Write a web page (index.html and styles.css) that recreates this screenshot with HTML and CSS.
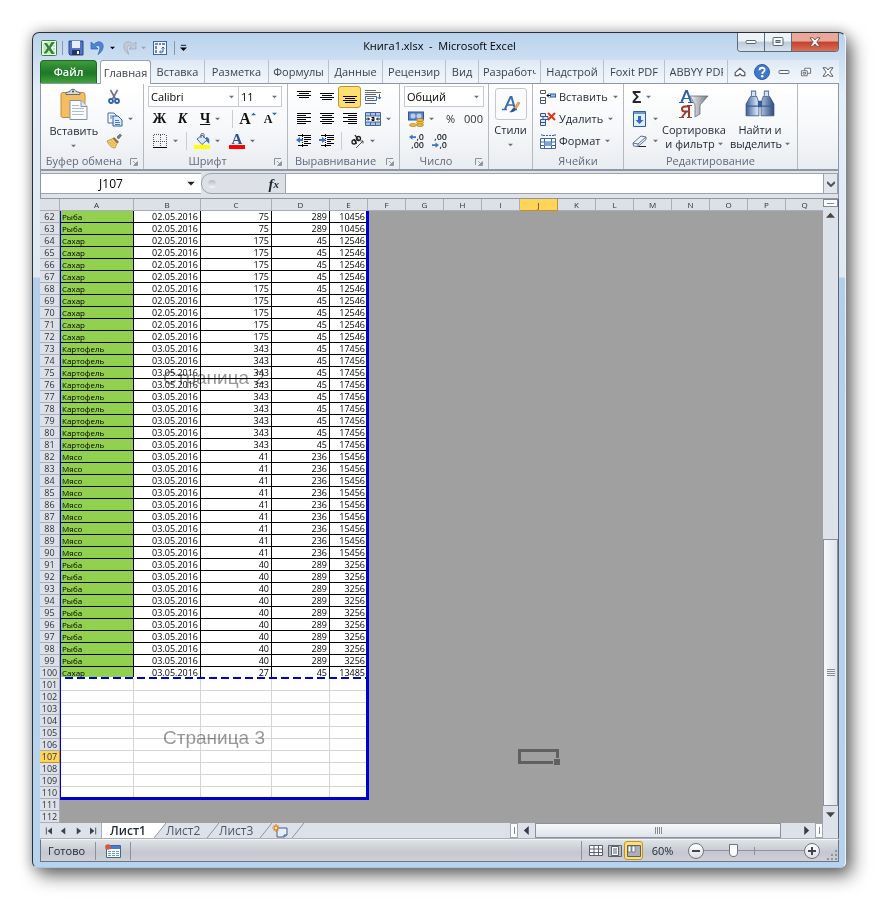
FILE: index.html
```html
<!DOCTYPE html>
<html lang="ru">
<head>
    <meta charset="UTF-8">
    <meta name="viewport" content="width=device-width, initial-scale=1.0">
    <title>Книга1.xlsx - Microsoft Excel</title>
    <link rel="stylesheet" href="styles.css">
</head>
<body>
    <svg class="sprite" aria-hidden="true">
        <defs>
            <linearGradient id="g-steel" x1="0" y1="0" x2="1" y2="0"><stop offset="0" stop-color="#3c5f97"/><stop offset=".4" stop-color="#d4e2f5"/><stop offset="1" stop-color="#2c4a7e"/></linearGradient>
            <linearGradient id="g-funnel" x1="0" y1="0" x2="1" y2="0"><stop offset="0" stop-color="#f2f2f2"/><stop offset="1" stop-color="#707880"/></linearGradient>
        </defs>
        <symbol id="arrow" viewBox="0 0 6 4"><path d="M0 0.500h6L3 3.500z" fill="currentColor"/></symbol>
        <symbol id="excel" viewBox="0 0 16 16"><rect x=".5" y=".5" width="15" height="15" rx="1" fill="#fff" stroke="#2f8a35"/><path d="M2 3l8-1.500v13L2 13z" fill="#cde8c8"/><path d="M3 3h3l2 3.500L10.500 2H14L9.700 8l4.300 6h-3.500L8 10l-2.500 3.500h-3L6.300 8z" fill="#2c8a30"/><path d="M12 6h2M12 9h2M12 12h2" stroke="#8cc28a"/></symbol>
        <symbol id="save" viewBox="0 0 16 16"><path d="M1 1h14v14H2l-1-1z" fill="#4f74c8" stroke="#2b4488"/><rect x="4" y="1" width="8" height="7" fill="#e8eefa"/><rect x="4" y="10" width="8" height="5" fill="#26375f"/><rect x="9" y="11" width="2" height="3" fill="#fff"/></symbol>
        <symbol id="undo" viewBox="0 0 16 16"><path d="M1 2v7h7L5.500 6.500C9 4 12 6 8 14.500c7-4 7-14-.5-12.500-1.500.5-3 1.500-3.500 2.500z" fill="#4d86d6" stroke="#2f5fa8" stroke-width=".7"/></symbol>
        <symbol id="redo" viewBox="0 0 16 16"><path d="M15 2v7H8l2.500-2.500C7 4 4 6 8 14.500 1 10.500 1 .5 8.500 2c1.500.5 3 1.500 3.500 2.500z" fill="#c4cbd4" stroke="#9ca6b2" stroke-width=".7"/></symbol>
        <symbol id="pivot" viewBox="0 0 16 16"><rect x="1.500" y="1.500" width="13" height="13" fill="#f4f8fd" stroke="#3f64a0"/><path d="M3 4h3M7 4h2M10 4h3M4 6v3M4 10v3" stroke="#3f64a0" stroke-width="1.500"/><path d="M8 12h3V7M9.500 8.500L11 7l1.500 1.500M9 10.500L7.500 12 9 13.500" fill="none" stroke="#2f5fa8"/></symbol>
        <symbol id="customize" viewBox="0 0 8 8"><path d="M1 1.500h6" stroke="#000"/><path d="M0 4h8L4 8z"/></symbol>
        <symbol id="minimize" viewBox="0 0 12 8"><rect x="1" y="2.500" width="10" height="3" rx="1" fill="#fff" stroke="#5a6470"/></symbol>
        <symbol id="maximize" viewBox="0 0 12 10"><rect x="1" y=".5" width="10" height="8" rx="1" fill="#fff" stroke="#5a6470"/><rect x="4" y="3.500" width="4" height="2" fill="#9fb2c8" stroke="#5a6470"/></symbol>
        <symbol id="close" viewBox="0 0 12 10"><path d="M1 .8h3.200L6 3l1.800-2.200H11L7.800 5 11 9.200H7.800L6 7 4.200 9.200H1L4.200 5z" fill="#fff" stroke="#6b3c3c" stroke-width=".8"/></symbol>
        <symbol id="chevron-up" viewBox="0 0 10 8"><path d="M1 4.500L5 1l4 3.500v2.500H6.500L5 5.500 3.500 7H1z" fill="#fff" stroke="#555c66"/></symbol>
        <symbol id="help" viewBox="0 0 16 16"><circle cx="8" cy="8" r="7.500" fill="#3f78cf" stroke="#2b5ca8"/><path d="M5.500 6.200c0-3.300 5.200-3.200 5.200-.2 0 1.900-2.500 1.900-2.500 4" fill="none" stroke="#fff" stroke-width="1.800"/><circle cx="8.200" cy="12.200" r="1.200" fill="#fff"/></symbol>
        <symbol id="restore" viewBox="0 0 12 12"><path d="M4.500 1.500h7v6h-7z" fill="#fff" stroke="#555c66"/><path d="M.5 4.500h7v6h-7z" fill="#fff" stroke="#555c66"/><path d="M2.500 6.500h3v2h-3z" fill="none" stroke="#555c66"/></symbol>
        <symbol id="doc-close" viewBox="0 0 12 10"><path d="M1 .8h3.200L6 3l1.800-2.200H11L7.800 5 11 9.200H7.800L6 7 4.200 9.200H1L4.200 5z" fill="#fff" stroke="#555c66"/></symbol>
        <symbol id="paste" viewBox="0 0 28 32"><rect x="1" y="4" width="24" height="25" rx="2" fill="#f3bd62" stroke="#c88a35"/><path d="M6 6V4l4-1c0-3 6-3 6 0l4 1v2z" fill="#d7dbe0" stroke="#646c78"/><circle cx="13" cy="3" r="1" fill="#444"/><path d="M10 12h11l6 6v13H10z" fill="#fbfcfe" stroke="#8291ab"/><path d="M21 12v6h6" fill="#dfe7f4" stroke="#8291ab"/><path d="M12 17h7M12 20h12M12 23h12M12 26h12" stroke="#b0bccf"/></symbol>
        <symbol id="cut" viewBox="0 0 16 16"><path d="M4.500 1l5 9M11.500 1l-5 9" stroke="#6c7480" stroke-width="1.600"/><circle cx="5" cy="12" r="2" fill="none" stroke="#2f5fb8" stroke-width="1.800"/><circle cx="11" cy="12" r="2" fill="none" stroke="#2f5fb8" stroke-width="1.800"/></symbol>
        <symbol id="copy" viewBox="0 0 16 16"><path d="M1 2h6l3 3v7H1z" fill="#f4f8fd" stroke="#3d6cb5"/><path d="M6 5h5l4 4v6H6z" fill="#dce9fa" stroke="#2d5ca8"/><path d="M3 5h3M3 7h2M8 9.500h4M8 11.500h5M8 13.500h5" stroke="#4d7cc5"/></symbol>
        <symbol id="brush" viewBox="0 0 16 16"><path d="M11 4l3-3 1.500 1.500L12.500 6z" fill="#6c7f9c" stroke="#3c4a60" stroke-width=".6"/><path d="M8 4l5 5-2 1.500L6.500 6z" fill="#8a6a4a"/><path d="M1 8l6-2.500 4 5L9 15c-2 .5-6-2-8-7z" fill="#f3cd74" stroke="#b88b34" stroke-width=".8"/><path d="M3 9l5 4M5 7.500l4.500 4" stroke="#c89a45" stroke-width=".7"/></symbol>
        <symbol id="border" viewBox="0 0 16 16"><path d="M1.500 2v11M8.500 2v11M14.500 2v11M2 1.500h12M2 8.500h12" stroke="#555" stroke-dasharray="1 1"/><path d="M1 14.500h14" stroke="#000"/></symbol>
        <symbol id="bucket" viewBox="0 0 16 16"><path d="M3 6l5-4 5 5-5 4.500z" fill="#dbe8f8" stroke="#4b6d9c"/><path d="M7 5V1.500c0-1.500 3-1.500 3 0V5" fill="none" stroke="#4b5870"/><path d="M12 4c3 0 4 3 3 7-1-2-2-2-3-3z" fill="#3f6fb5"/><path d="M0 12h16v4H0z" fill="#ff0"/></symbol>
        <symbol id="align-v" viewBox="0 0 16 12"><path d="M1 2.500h14M3 4.500h10M1 6.500h14M3 8.500h10" stroke="#000"/></symbol>
        <symbol id="align-c" viewBox="0 0 16 12"><path d="M1 .5h14M3 2.500h10M1 4.500h14M3 6.500h10M1 8.500h14M3 10.500h10" stroke="#000"/></symbol>
        <symbol id="align-l" viewBox="0 0 16 12"><path d="M1 .5h14M1 2.500h9M1 4.500h14M1 6.500h9M1 8.500h14M1 10.500h9" stroke="#000"/></symbol>
        <symbol id="align-r" viewBox="0 0 16 12"><path d="M1 .5h14M6 2.500h9M1 4.500h14M6 6.500h9M1 8.500h14M6 10.500h9" stroke="#000"/></symbol>
        <symbol id="indent-out" viewBox="0 0 16 16"><path d="M2 2.500h13M8 4.500h7M8 6.500h7M8 8.500h4M8 10.500h7M2 12.500h10" stroke="#000"/><path d="M6.500 1v14" stroke="#000" stroke-dasharray="1 1"/><path d="M0 7l4-3v2h3v2H4v2z" fill="#3b74c8"/></symbol>
        <symbol id="indent-in" viewBox="0 0 16 16"><path d="M2 2.500h13M8 4.500h7M8 6.500h7M8 8.500h4M8 10.500h7M2 12.500h10" stroke="#000"/><path d="M6.500 1v14" stroke="#000" stroke-dasharray="1 1"/><path d="M7 7L3 4v2H0v2h3v2z" fill="#3b74c8"/></symbol>
        <symbol id="wrap" viewBox="0 0 16 16"><path d="M0 1.500h11M0 5.500h11M.5 7.500h11v4H.5zM0 14.500h11" fill="none" stroke="#44689f"/><path d="M0 3.500h16M2 9.500h7" stroke="#a8562c"/><path d="M14.500 5v5M12.500 8l2 2 1.500-2" fill="none" stroke="#2f5fa8"/></symbol>
        <symbol id="merge" viewBox="0 0 16 16"><path d="M.5 1.500h15v13H.5z" fill="#a9c3e8" stroke="#3f64a0"/><path d="M1 5h14v6H1z" fill="#fff"/><path d="M5.500 1.500V5M10.500 1.500V5M5.500 11v3.500M10.500 11v3.500M.5 5h15M.5 11h15" stroke="#3f64a0"/><path d="M1 8h3M12 8h3M3 6.500L4.500 8 3 9.500M13 6.500L11.500 8l1.500 1.500" fill="none" stroke="#000"/><path d="M6.500 6.500h2.500v3H7V8h2" fill="none" stroke="#000"/></symbol>
        <symbol id="orient" viewBox="0 0 16 16"><g fill="none" stroke="#222" stroke-width="1.300"><circle cx="5" cy="9" r="2"/><path d="M5 6l2.500 5"/><path d="M6 2l4 6"/><circle cx="9.500" cy="5.500" r="2"/></g><path d="M7 15l7-7M11.500 8H14v2.500" fill="none" stroke="#555"/></symbol>
        <symbol id="money" viewBox="0 0 16 16"><rect x=".5" y="1" width="15" height="8" fill="#5d87c6" stroke="#2f5796"/><circle cx="5" cy="5" r="2.500" fill="#b9d0ee"/><circle cx="11" cy="5" r="2.500" fill="#b9d0ee"/><g fill="#f2c043" stroke="#a87a1c" stroke-width=".7"><ellipse cx="12" cy="14" rx="3.500" ry="1.500"/><ellipse cx="12" cy="11.500" rx="3.500" ry="1.500"/><ellipse cx="12" cy="9" rx="3.500" ry="1.500"/><ellipse cx="5" cy="14" rx="3.500" ry="1.500"/></g></symbol>
        <symbol id="left-blue" viewBox="0 0 8 6"><path d="M0 3l4-3v2h4v2H4v2z" fill="#3b74c8"/></symbol>
        <symbol id="right-blue" viewBox="0 0 8 6"><path d="M8 3L4 0v2H0v2h4v2z" fill="#3b74c8"/></symbol>
        <symbol id="styles" viewBox="0 0 20 20"><g fill="none" stroke="#3c6cb4"><path d="M4 15L9.500 3h1L14 15" stroke-width="2"/><path d="M6 11h7M1 15.500h5M11 15.500h5" stroke-width="1.500"/></g><path d="M17 8l2 1-4 6-2-1z" fill="#e9b45a" stroke="#9c6a24" stroke-width=".5"/><path d="M8 18c2 0 3-4 5-4l2 1c0 2-4 4-7 3z" fill="#2d5597"/></symbol>
        <symbol id="insert" viewBox="0 0 16 16"><path d="M.5 1.500h5v3h-5zM.5 8.500h5v6h-5zM.5 11.500h5" fill="#fff" stroke="#4a5a70"/><path d="M7 6.500h4M9 4.500l-2 2 2 2" fill="none" stroke="#000"/><rect x="10.500" y="5" width="5" height="3" fill="#9fc0ec" stroke="#2f5fa8"/></symbol>
        <symbol id="delete" viewBox="0 0 16 16"><path d="M.5 2.500h5v3h-5zM.5 8.500h5v6h-5zM.5 11.500h5M3 5.500h5v3H3z" fill="#dce9f8" stroke="#35588c"/><path d="M8 2l7 7M15 2L8 9" stroke="#e03418" stroke-width="2"/></symbol>
        <symbol id="format" viewBox="0 0 16 16"><path d="M2 1v3M15 1v3M3 2.500h11" stroke="#2f5fa8" stroke-dasharray="2 1"/><path d="M.5 5.500h15v10H.5z" fill="#fff" stroke="#3f64a0"/><path d="M4.500 5.500v10M11.500 5.500v10M.5 9h15M.5 12.500h15" stroke="#3f64a0"/><path d="M4.500 9h7v4h-7z" fill="#7ba4dc"/></symbol>
        <symbol id="fill" viewBox="0 0 14 16"><path d="M.5.500h12v15H.5z" fill="#e3eefb" stroke="#2f5fa8"/><path d="M1 1h11v2H1z" fill="#6d98d6"/><path d="M5 5h3v4h2.500l-4 4-4-4H5z" fill="#2f6ac8"/></symbol>
        <symbol id="eraser" viewBox="0 0 16 16"><path d="M5 13.500h9" stroke="#222"/><path d="M1 10l8-7 5 1v2.500L6 13.500 1.500 13z" fill="#f1f5fb" stroke="#5c6f90"/><path d="M1 10l5 1v2.500M6 11l8-7" fill="none" stroke="#5c6f90"/></symbol>
        <symbol id="sort" viewBox="0 0 30 30"><path d="M11 7h18l-8 9v9l-5 3V16z" fill="url(#g-funnel)" stroke="#666e78" stroke-width=".8"/><g fill="none" stroke="#2c5cb0"><path d="M2.500 13L7 2h1l4 11" stroke-width="2"/><path d="M4 9.500h6M0 13.500h5M9 13.500h5"/></g><g fill="none" stroke="#9b3a28"><path d="M10 17v11M10 17.500H6c-4 0-4 5 0 5h4M7 23l-4 5" stroke-width="2"/><path d="M0 28.500h5M8 28.500h5M8 16.500h5"/></g></symbol>
        <symbol id="find" viewBox="0 0 28 26"><path d="M5 6h6l2 6v12H1V13zM17 6h6l4 7v11H15V12z" fill="url(#g-steel)" stroke="#2e4a7c" stroke-width=".7"/><path d="M12 10h4v6h-4z" fill="#385c98"/><path d="M6 1h4v5H6zM18 1h4v5h-4z" fill="#d5e1f2" stroke="#5a78a8"/><path d="M1 15h12M15 15h12" stroke="#3c5c90"/></symbol>
        <symbol id="launcher" viewBox="0 0 8 8"><path d="M.5 7V.5H7" fill="none" stroke="#8a929e"/><path d="M3 3l3 3M7.500 3.500v4h-4z" fill="#8a929e" stroke="#8a929e" stroke-width=".8"/></symbol>
        <symbol id="new-sheet" viewBox="0 0 16 14"><path d="M5 4h10v7l-3 2H5z" fill="#e6eefa" stroke="#3f5f92"/><path d="M15 11h-3v2" fill="#a9bfe0" stroke="#3f5f92"/><path d="M4 0v8M0 4h8M1.500 1.500l5 5M6.500 1.500l-5 5" stroke="#e07d1c" stroke-width="1.200"/><circle cx="4" cy="4" r="1.300" fill="#fff2b0"/></symbol>
        <symbol id="macro" viewBox="0 0 16 14"><path d="M1.500 1.500h14v12h-14z" fill="#fff" stroke="#3f64a0"/><path d="M2 2h13v3H2z" fill="#4b7cc8"/><path d="M3 7.500h11M3 9.500h11M3 11.500h11" stroke="#6f94cc" stroke-dasharray="3 1"/><circle cx="3" cy="3" r="2.800" fill="#d5583a"/></symbol>
        <symbol id="view-grid" viewBox="0 0 14 12"><path d="M.5.500h13v10H.5zM5 .5v10M9.500.500v10M.5 4h13M.5 7.500h13" fill="#fff" stroke="#5a626e"/></symbol>
        <symbol id="view-page" viewBox="0 0 14 12"><path d="M.5.500h13v11H.5z" fill="#b4bac2" stroke="#5a626e"/><path d="M3.500 1.500h7v9h-7z" fill="#fff" stroke="#5a626e"/><path d="M5 4h4M5 6h4M5 8h4" stroke="#5a626e"/></symbol>
        <symbol id="view-break" viewBox="0 0 14 12"><path d="M.5.500h13v11H.5z" fill="#a9b0bb" stroke="#5a626e"/><path d="M1 1h3v6H1zM5 1h3v6H5z" fill="#fff" stroke="#5a626e" stroke-width=".7"/></symbol>
        <symbol id="slant" viewBox="0 0 12 15"><path d="M0 15L12 0" stroke="#8d949f"/></symbol>
        <symbol id="slant-on" viewBox="0 0 12 15"><path d="M0 0h12L0 15z" fill="#fff"/><path d="M0 15L12 0" stroke="#8d949f"/></symbol>
    </svg>

    <div class="window">
        <header class="title-bar">
            <div class="quick">
                <svg class="ico"><use href="#excel"/></svg>
                <span class="bar-sep"></span>
                <button class="quick-btn" aria-label="Сохранить"><svg class="ico"><use href="#save"/></svg></button>
                <button class="quick-btn" aria-label="Отменить"><svg class="ico"><use href="#undo"/></svg><svg class="arrow"><use href="#arrow"/></svg></button>
                <button class="quick-btn off" aria-label="Вернуть"><svg class="ico"><use href="#redo"/></svg><svg class="arrow"><use href="#arrow"/></svg></button>
                <button class="quick-btn" aria-label="Сводная таблица"><svg class="ico"><use href="#pivot"/></svg></button>
                <span class="bar-sep"></span>
                <button class="quick-btn" aria-label="Настройка панели"><svg class="customize"><use href="#customize"/></svg></button>
            </div>
            <h1 class="title">Книга1.xlsx&nbsp; -&nbsp; Microsoft Excel</h1>
            <div class="win-buttons">
                <button class="win-btn" aria-label="Свернуть"><svg><use href="#minimize"/></svg></button>
                <button class="win-btn" aria-label="Развернуть"><svg><use href="#maximize"/></svg></button>
                <button class="win-btn win-close" aria-label="Закрыть"><svg><use href="#close"/></svg></button>
            </div>
        </header>

        <nav class="tabs">
            <button class="tab file">Файл</button>
            <button class="tab active">Главная</button>
            <button class="tab">Вставка</button>
            <button class="tab">Разметка</button>
            <button class="tab">Формулы</button>
            <button class="tab">Данные</button>
            <button class="tab">Рецензир</button>
            <button class="tab">Вид</button>
            <button class="tab"><span class="clip">Разработч</span></button>
            <button class="tab">Надстрой</button>
            <button class="tab">Foxit PDF</button>
            <button class="tab"><span class="clip">ABBYY PDF</span></button>
            <div class="doc-buttons">
                <button class="doc-btn" aria-label="Свернуть ленту"><svg class="mini"><use href="#chevron-up"/></svg></button>
                <button class="doc-btn" aria-label="Справка"><svg class="ico"><use href="#help"/></svg></button>
                <button class="doc-btn" aria-label="Свернуть окно"><svg class="mini"><use href="#minimize"/></svg></button>
                <button class="doc-btn" aria-label="Восстановить окно"><svg class="mini"><use href="#restore"/></svg></button>
                <button class="doc-btn" aria-label="Закрыть окно"><svg class="mini"><use href="#doc-close"/></svg></button>
            </div>
        </nav>

        <section class="ribbon">
            <div class="group">
                <div class="group-body side">
                    <button class="big"><svg class="paste"><use href="#paste"/></svg>Вставить<svg class="arrow"><use href="#arrow"/></svg></button>
                    <div class="stack">
                        <button class="tool" aria-label="Вырезать"><svg class="ico"><use href="#cut"/></svg></button>
                        <button class="tool drop" aria-label="Копировать"><svg class="ico"><use href="#copy"/></svg><svg class="arrow"><use href="#arrow"/></svg></button>
                        <button class="tool" aria-label="Формат по образцу"><svg class="ico"><use href="#brush"/></svg></button>
                    </div>
                </div>
                <div class="group-title">Буфер обмена<svg class="launcher"><use href="#launcher"/></svg></div>
            </div>

            <div class="group">
                <div class="group-body stack">
                    <div class="line">
                        <label class="combo font-name"><select aria-label="Шрифт"><option>Calibri</option></select><svg class="arrow"><use href="#arrow"/></svg></label>
                        <label class="combo font-size"><select aria-label="Размер"><option>11</option></select><svg class="arrow"><use href="#arrow"/></svg></label>
                    </div>
                    <div class="line">
                        <button class="tool letter">Ж</button>
                        <button class="tool letter italic">К</button>
                        <button class="tool drop letter"><u>Ч</u><svg class="arrow"><use href="#arrow"/></svg></button>
                        <span class="sep"></span>
                        <button class="tool letter grow">A<svg class="caret up"><use href="#arrow"/></svg></button>
                        <button class="tool letter shrink">A<svg class="caret"><use href="#arrow"/></svg></button>
                    </div>
                    <div class="line">
                        <button class="tool drop" aria-label="Границы"><svg class="ico"><use href="#border"/></svg><svg class="arrow"><use href="#arrow"/></svg></button>
                        <span class="sep"></span>
                        <button class="tool drop" aria-label="Заливка"><svg class="ico"><use href="#bucket"/></svg><svg class="arrow"><use href="#arrow"/></svg></button>
                        <button class="tool drop"><span class="font-color">A</span><svg class="arrow"><use href="#arrow"/></svg></button>
                    </div>
                </div>
                <div class="group-title">Шрифт<svg class="launcher"><use href="#launcher"/></svg></div>
            </div>

            <div class="group">
                <div class="group-body stack">
                    <div class="line">
                        <button class="tool lift" aria-label="По верхнему краю"><svg class="lines"><use href="#align-v"/></svg></button>
                        <button class="tool" aria-label="По середине"><svg class="lines"><use href="#align-v"/></svg></button>
                        <button class="tool pressed sink" aria-label="По нижнему краю"><svg class="lines"><use href="#align-v"/></svg></button>
                        <button class="tool drop" aria-label="Перенос текста"><svg class="ico"><use href="#wrap"/></svg></button>
                    </div>
                    <div class="line">
                        <button class="tool" aria-label="По левому краю"><svg class="lines"><use href="#align-l"/></svg></button>
                        <button class="tool" aria-label="По центру"><svg class="lines"><use href="#align-c"/></svg></button>
                        <button class="tool" aria-label="По правому краю"><svg class="lines"><use href="#align-r"/></svg></button>
                        <button class="tool drop" aria-label="Объединить"><svg class="ico"><use href="#merge"/></svg><svg class="arrow"><use href="#arrow"/></svg></button>
                    </div>
                    <div class="line">
                        <button class="tool" aria-label="Уменьшить отступ"><svg class="ico"><use href="#indent-out"/></svg></button>
                        <button class="tool" aria-label="Увеличить отступ"><svg class="ico"><use href="#indent-in"/></svg></button>
                        <span class="sep"></span>
                        <button class="tool drop" aria-label="Ориентация"><svg class="ico"><use href="#orient"/></svg><svg class="arrow"><use href="#arrow"/></svg></button>
                    </div>
                </div>
                <div class="group-title">Выравнивание<svg class="launcher"><use href="#launcher"/></svg></div>
            </div>

            <div class="group">
                <div class="group-body stack">
                    <div class="line">
                        <label class="combo number-format"><select aria-label="Числовой формат"><option>Общий</option></select><svg class="arrow"><use href="#arrow"/></svg></label>
                    </div>
                    <div class="line">
                        <button class="tool drop" aria-label="Финансовый формат"><svg class="ico"><use href="#money"/></svg><svg class="arrow"><use href="#arrow"/></svg></button>
                        <button class="tool digits">%</button>
                        <button class="tool digits">000</button>
                    </div>
                    <div class="line">
                        <button class="tool decimals"><span><svg class="step"><use href="#left-blue"/></svg>,0</span><span>,00</span></button>
                        <button class="tool decimals"><span>,00</span><span><svg class="step"><use href="#right-blue"/></svg>,0</span></button>
                    </div>
                </div>
                <div class="group-title">Число<svg class="launcher"><use href="#launcher"/></svg></div>
            </div>

            <div class="group">
                <div class="group-body side center">
                    <button class="big"><span class="styles-box"><svg class="styles"><use href="#styles"/></svg></span>Стили<svg class="arrow"><use href="#arrow"/></svg></button>
                </div>
            </div>

            <div class="group">
                <div class="group-body stack">
                    <button class="wide"><svg class="ico"><use href="#insert"/></svg>Вставить<svg class="arrow"><use href="#arrow"/></svg></button>
                    <button class="wide"><svg class="ico"><use href="#delete"/></svg>Удалить<svg class="arrow"><use href="#arrow"/></svg></button>
                    <button class="wide"><svg class="ico"><use href="#format"/></svg>Формат<svg class="arrow"><use href="#arrow"/></svg></button>
                </div>
                <div class="group-title plain">Ячейки</div>
            </div>

            <div class="group">
                <div class="group-body side editing">
                    <div class="stack">
                        <button class="tool drop sum">Σ<svg class="arrow"><use href="#arrow"/></svg></button>
                        <button class="tool drop" aria-label="Заполнить"><svg class="ico"><use href="#fill"/></svg><svg class="arrow"><use href="#arrow"/></svg></button>
                        <button class="tool drop" aria-label="Очистить"><svg class="ico"><use href="#eraser"/></svg><svg class="arrow"><use href="#arrow"/></svg></button>
                    </div>
                    <button class="big edit"><svg class="large"><use href="#sort"/></svg>Сортировка<span>и фильтр <svg class="arrow"><use href="#arrow"/></svg></span></button>
                    <button class="big edit"><svg class="large"><use href="#find"/></svg>Найти и<span>выделить <svg class="arrow"><use href="#arrow"/></svg></span></button>
                </div>
                <div class="group-title plain">Редактирование</div>
            </div>
        </section>

        <section class="formula-bar">
            <label class="name-box"><input type="text" value="J107" aria-label="Имя"><svg class="name-arrow"><use href="#arrow"/></svg></label>
            <div class="fx-area"><span class="knob"></span><button class="fx">f<sub>x</sub></button></div>
            <input class="formula" type="text" aria-label="Строка формул">
            <button class="expand" aria-label="Развернуть строку формул"><svg viewBox="0 0 8 6"><path d="M0 1l4 4 4-4" fill="none" stroke="#4c545e" stroke-width="2"/></svg></button>
        </section>

        <main class="workspace">
            <div class="sheet">
                <table class="grid">
                    <colgroup>
                        <col class="c-head"><col class="c-a"><col class="c-b"><col class="c-c"><col class="c-d"><col class="c-e">
                        <col span="12" class="c-rest">
                    </colgroup>
                    <thead>
                        <tr>
                            <th class="corner"></th><th>A</th><th>B</th><th>C</th><th>D</th><th>E</th><th>F</th><th>G</th><th>H</th><th>I</th><th class="current">J</th><th>K</th><th>L</th><th>M</th><th>N</th><th>O</th><th>P</th><th>Q</th>
                        </tr>
                    </thead>
                    <tbody id="rows"></tbody>
                </table>
                <div class="print-area"><span class="page-break"></span></div>
                <span class="page-mark second">Страница 2</span>
                <span class="page-mark third">Страница 3</span>
                <span class="cell-cursor"></span>
            </div>
            <div class="v-scroll">
                <span class="v-split"></span>
                <button class="scroll-btn" aria-label="Вверх"><svg viewBox="0 0 10 6"><path d="M0 5.500L5 0l5 5.500z" fill="#4a4444"/></svg></button>
                <span class="v-track"></span>
                <span class="v-thumb"></span>
                <button class="scroll-btn" aria-label="Вниз"><svg viewBox="0 0 10 6"><path d="M0 .5L5 6l5-5.500z" fill="#4a4444"/></svg></button>
            </div>
        </main>

        <div class="sheet-bar">
            <div class="sheet-nav">
                <button aria-label="Первый лист"><svg viewBox="0 0 8 8"><path d="M1.500 0v8" stroke="#3b424c"/><path d="M8 0v8L3 4z" fill="#3b424c"/></svg></button>
                <button aria-label="Предыдущий лист"><svg viewBox="0 0 8 8"><path d="M6 0v8L1 4z" fill="#3b424c"/></svg></button>
                <button aria-label="Следующий лист"><svg viewBox="0 0 8 8"><path d="M2 0v8l5-4z" fill="#3b424c"/></svg></button>
                <button aria-label="Последний лист"><svg viewBox="0 0 8 8"><path d="M6.500 0v8" stroke="#3b424c"/><path d="M0 0v8l5-4z" fill="#3b424c"/></svg></button>
            </div>
            <button class="sheet-tab current">Лист1</button><svg class="slant"><use href="#slant-on"/></svg>
            <button class="sheet-tab">Лист2</button><svg class="slant"><use href="#slant"/></svg>
            <button class="sheet-tab">Лист3</button><svg class="slant"><use href="#slant"/></svg>
            <button class="sheet-tab add" aria-label="Вставить лист"><svg class="new-sheet"><use href="#new-sheet"/></svg></button><svg class="slant"><use href="#slant"/></svg>
            <div class="h-scroll">
                <span class="h-split"></span>
                <button class="scroll-btn" aria-label="Влево"><svg viewBox="0 0 6 10"><path d="M5.500 0v10L0 5z" fill="#3b3b44"/></svg></button>
                <span class="h-thumb"></span>
                <span class="h-track"></span>
                <button class="scroll-btn" aria-label="Вправо"><svg viewBox="0 0 6 10"><path d="M.5 0v10L6 5z" fill="#3b3b44"/></svg></button>
                <span class="h-split"></span>
            </div>
            <span class="scroll-corner"></span>
        </div>

        <footer class="status">
            <span class="ready">Готово</span>
            <button class="macro" aria-label="Запись макроса"><svg class="ico"><use href="#macro"/></svg></button>
            <div class="views">
                <button class="view" aria-label="Обычный"><svg><use href="#view-grid"/></svg></button>
                <button class="view" aria-label="Разметка страницы"><svg><use href="#view-page"/></svg></button>
                <button class="view pressed" aria-label="Страничный режим"><svg><use href="#view-break"/></svg></button>
            </div>
            <label class="zoom-label" for="zoom">60%</label>
            <button class="round" aria-label="Уменьшить"><svg viewBox="0 0 8 8"><path d="M0 4h8" stroke="#3f4650" stroke-width="2"/></svg></button>
            <input id="zoom" class="zoom" type="range" min="0" max="100" value="28">
            <button class="round" aria-label="Увеличить"><svg viewBox="0 0 8 8"><path d="M0 4h8M4 0v8" stroke="#3f4650" stroke-width="2"/></svg></button>
            <svg class="grip" viewBox="0 0 12 12"><path d="M9 1h2v2H9zM5 5h2v2H5zM9 5h2v2H9zM1 9h2v2H1zM5 9h2v2H5zM9 9h2v2H9z" fill="#8d949e"/></svg>
        </footer>
    </div>

    <script src="script.js"></script>
</body>
</html>
```
FILE: styles.css
```css
* {
    box-sizing: border-box;
}
body {
    margin: 0;
    padding: 32px 33px 33px 32px;
    background: #fff;
    font-family: "Open Sans", "Noto Sans", sans-serif;
    font-size: 11px;
    line-height: 14px;
    color: #1e2531;
}
button, input, select {
    margin: 0;
    padding: 0;
    border: 0;
    background: none;
    font: inherit;
    color: inherit;
    border-radius: 0;
    outline: 0;
}
button {
    display: flex;
    align-items: center;
    justify-content: center;
}
svg {
    display: block;
    flex: none;
}
.sprite {
    position: absolute;
    width: 0;
    height: 0;
}
.ico {
    width: 16px;
    height: 16px;
}
.arrow {
    width: 5px;
    height: 4px;
    color: #6a717c;
}

/* window frame */
.window {
    padding: 0 6px 5px 7px;
    border: 1px solid #2b3038;
    border-right-color: #eaf3fb;
    border-bottom-color: #a9c3e0;
    border-radius: 7px 7px 6px 6px;
    background: linear-gradient(#b9d2ec 0, #e4eef8 60px, #dfe9f4 244px, #b4cfea 245px, #b8d3ee 100%);
    box-shadow: 6px 8px 18px 0 rgba(0, 0, 0, 0.55), 0 0 12px 2px rgba(0, 0, 0, 0.2);
}
.title-bar {
    display: grid;
    grid-template-columns: 1fr auto 1fr;
    height: 27px;
}
.quick {
    display: flex;
    align-items: center;
    gap: 5px;
    padding: 2px 0 0 1px;
}
.quick-btn {
    gap: 4px;
    height: 22px;
    padding-right: 1px;
}
.quick-btn .arrow {
    color: #000;
}
.quick-btn.off .arrow {
    color: #9aa2ac;
}
.bar-sep {
    width: 1px;
    height: 14px;
    background: #8b97a6;
}
.customize {
    width: 7px;
    height: 7px;
}
.title {
    margin: 0;
    font-size: 11px;
    font-weight: 400;
    line-height: 26px;
    color: #000;
}
.win-buttons {
    display: flex;
    justify-self: end;
    height: 19px;
    border: 1px solid #5d6b7c;
    border-top: 0;
    border-radius: 0 0 4px 4px;
    overflow: hidden;
}
.win-btn {
    width: 27px;
    border-right: 1px solid #5d6b7c;
    background: linear-gradient(#eef3f8 45%, #bccad9 50%, #d8e3ee);
}
.win-btn svg {
    width: 12px;
    height: 10px;
}
.win-close {
    width: 46px;
    border-right: 0;
    background: linear-gradient(#e9a898 45%, #c5402c 50%, #d87058);
}

/* ribbon tabs */
.tabs {
    display: grid;
    grid-template-columns: 60px 51px 54px 64px 60px 54px 63px 33px 62px 63px 61px 63px 1fr;
    height: 24px;
    border-bottom: 1px solid #8d97a3;
    background: linear-gradient(#dfe9f4, #f3f7fb);
}
.tab {
    height: 23px;
    border-right: 1px solid #b9c1cb;
    color: #3b424d;
    white-space: nowrap;
    overflow: hidden;
}
.tab.file {
    width: 57px;
    border: 1px solid #1f6a24;
    border-bottom: 0;
    border-radius: 4px 4px 0 0;
    background: linear-gradient(#3f9a3c, #1f7627 55%, #3fa43a);
    color: #fff;
    font-weight: 600;
}
.tab.active {
    height: 24px;
    border: 1px solid #98a3b0;
    border-bottom: 0;
    border-radius: 3px 3px 0 0;
    background: #fff;
}
.clip {
    width: 53px;
    text-align: left;
    overflow: hidden;
}
.doc-buttons {
    display: grid;
    grid-template-columns: repeat(5, 22px);
    justify-content: center;
}
.mini {
    width: 12px;
    height: 10px;
}

/* ribbon */
.ribbon {
    display: grid;
    grid-template-columns: 103px 144px 112px 89px 44px 91px 174px;
    height: 87px;
    border-left: 1px solid #8d97a3;
    border-right: 1px solid #8d97a3;
    border-bottom: 2px solid #8e97a2;
    background: linear-gradient(#fff, #f7f8fa 50%, #e9ecf0);
}
.group {
    display: flex;
    flex-direction: column;
    border-right: 1px solid #b4bac2;
    padding: 2px 0 0 4px;
}
.group-body {
    height: 67px;
}
.side {
    display: flex;
    justify-content: space-between;
}
.center {
    justify-content: center;
    padding-right: 4px;
}
.editing {
    justify-content: flex-start;
}
.stack {
    display: flex;
    flex-direction: column;
    align-items: flex-start;
}
.line {
    display: flex;
    height: 22px;
}
.group-title {
    display: flex;
    align-items: center;
    justify-content: center;
    position: relative;
    height: 16px;
    padding-right: 20px;
    color: #66677e;
    white-space: nowrap;
}
.group-title.plain {
    padding-right: 4px;
}
.launcher {
    position: absolute;
    right: 5px;
    top: 5px;
    width: 8px;
    height: 8px;
}
.tool {
    position: relative;
    width: 23px;
    height: 22px;
}
.tool.drop {
    width: 35px;
    justify-content: flex-start;
    gap: 5px;
    padding-left: 4px;
}
.sep {
    width: 1px;
    height: 18px;
    margin: 2px 3px;
    background: #c9ced5;
}
.combo {
    position: relative;
    display: flex;
    align-items: center;
    height: 21px;
    border: 1px solid #c6cbd2;
    background: #fff;
}
.combo select {
    width: 100%;
    height: 19px;
    padding-left: 2px;
    appearance: none;
    color: #000;
}
.combo .arrow {
    position: absolute;
    right: 4px;
    top: 8px;
}
.font-name {
    width: 91px;
}
.font-size {
    width: 43px;
    border-left: 0;
}
.number-format {
    width: 80px;
}
.letter {
    font-family: "Liberation Serif", serif;
    font-size: 14px;
    font-weight: 700;
    color: #111;
}
.letter.drop {
    gap: 5px;
    padding-left: 6px;
}
.italic {
    font-style: italic;
}
.grow {
    font-size: 16px;
}
.shrink {
    font-size: 12px;
}
.caret {
    width: 5px;
    height: 4px;
    color: #2f5fb8;
    align-self: flex-start;
    margin-top: 4px;
}
.caret.up {
    transform: rotate(180deg);
}
.font-color {
    width: 16px;
    height: 16px;
    border-bottom: 4px solid #f00;
    font-family: "Liberation Serif", serif;
    font-size: 15px;
    font-weight: 700;
    line-height: 12px;
    color: #2c4f92;
}
.lines {
    width: 16px;
    height: 12px;
}
.lift {
    padding-bottom: 4px;
}
.sink {
    padding-top: 6px;
}
.pressed {
    border: 1px solid #c2922f;
    border-radius: 3px;
    background: #ffdf70;
}
.digits {
    font-size: 11px;
    color: #333;
}
.decimals {
    flex-direction: column;
    align-items: flex-end;
    padding-right: 3px;
    font-size: 9px;
    font-weight: 600;
    line-height: 8px;
}
.decimals span {
    display: flex;
    align-items: center;
}
.step {
    width: 7px;
    height: 6px;
}
.big {
    flex-direction: column;
    justify-content: flex-start;
    gap: 3px;
    width: 60px;
    padding-top: 2px;
    white-space: nowrap;
}
.paste {
    width: 28px;
    height: 33px;
}
.big .arrow {
    margin-top: 3px;
}
.side > .stack {
    width: 42px;
}
.editing > .stack {
    width: 33px;
}
.styles-box {
    display: flex;
    align-items: center;
    justify-content: center;
    width: 32px;
    height: 32px;
    border: 1px solid #c3c8d0;
    border-radius: 3px;
    background: #fbfbfc;
}
.styles {
    width: 20px;
    height: 20px;
}
.wide {
    gap: 3px;
    height: 22px;
    padding-left: 3px;
}
.wide .arrow {
    margin-left: 2px;
}
.sum {
    font-size: 16px;
    font-weight: 700;
}
.big.edit {
    width: 66px;
    gap: 0;
}
.big.edit span {
    display: flex;
    align-items: center;
    gap: 3px;
}
.big.edit .arrow {
    margin-top: 0;
}
.big.edit .large {
    width: 30px;
    height: 30px;
    margin: 1px 0 4px;
}

/* formula bar */
.formula-bar {
    display: flex;
    height: 28px;
    padding: 2px 0 4px;
    border: 1px solid #8d97a3;
    border-width: 0 1px 1px;
    background: #dfe3e9;
}
.name-box {
    display: flex;
    align-items: center;
    width: 160px;
    border: 1px solid #9aa2ad;
    border-width: 1px 0;
    background: #fff;
}
.name-box input {
    width: 140px;
    text-align: center;
    font-size: 12px;
    color: #000;
}
.name-arrow {
    width: 8px;
    height: 5px;
    margin-left: 6px;
}
.fx-area {
    display: flex;
    align-items: center;
    justify-content: space-between;
    width: 85px;
    padding: 0 6px;
    border: 1px solid #9aa2ad;
    border-radius: 10px 0 0 10px;
    background: #dde1e7;
}
.knob {
    width: 8px;
    height: 8px;
    border-radius: 50%;
    background: linear-gradient(#b5bac2, #f5f6f8);
}
.fx {
    font-family: "Liberation Serif", serif;
    font-size: 15px;
    font-style: italic;
    font-weight: 700;
}
.fx sub {
    font-size: 11px;
}
.formula {
    flex: 1;
    min-width: 0;
    border: 1px solid #9aa2ad;
    border-width: 1px 0;
    background: #fff;
}
.expand {
    width: 15px;
    border: 1px solid #9aa2ad;
    background: #e3e6eb;
}
.expand svg {
    width: 8px;
    height: 6px;
}

/* sheet */
.workspace {
    display: flex;
    border-right: 1px solid #5b6470;
}
.sheet {
    position: relative;
    flex: 1;
    min-width: 0;
    overflow: hidden;
    background: #a0a0a0;
}
.grid {
    width: 783px;
    table-layout: fixed;
    border-collapse: separate;
    border-spacing: 0;
    font-size: 9px;
    line-height: 11px;
    color: #000;
}
.c-head { width: 20px; }
.c-a { width: 74px; }
.c-b { width: 67px; }
.c-c { width: 71px; }
.c-d { width: 58px; }
.c-e { width: 38px; }
.c-rest { width: 38px; }
.grid th, .grid td {
    height: 12px;
    padding: 0;
    overflow: hidden;
    white-space: nowrap;
}
.grid th {
    border: 1px solid #a9afb8;
    border-width: 0 1px 1px 0;
    background: #dde1e7;
    font-weight: 400;
    color: #2a313c;
}
.grid thead th {
    font-size: 8px;
}
.grid th.current {
    border-color: #c2922f;
    background: #ffd559;
}
.grid td {
    text-align: right;
}
.grid .data td {
    padding-right: 2px;
    border: 1px solid #000;
    border-width: 0 1px 1px 0;
    background: #fff;
}
.grid .data .product {
    padding-left: 2px;
    background: #92d050;
    font-size: 8px;
    text-align: left;
}
.grid .blank td {
    border: 1px solid #d4d4d4;
    border-width: 0 1px 1px 0;
    background: #fff;
}
.grid .data .void, .grid .blank .void, .grid .void {
    border: 0;
    background: #a0a0a0;
}
.print-area {
    position: absolute;
    left: 20px;
    top: 12px;
    width: 309px;
    height: 589px;
    border: solid #0000d0;
    border-width: 0 3px 3px 1px;
}
.page-break {
    position: absolute;
    left: 0;
    right: 0;
    top: 466px;
    height: 2px;
    background: repeating-linear-gradient(90deg, #fff 0, #fff 4px, #0000d0 4px, #0000d0 12px);
}
.page-mark {
    position: absolute;
    left: 123px;
    font-family: "Liberation Sans", sans-serif;
    font-size: 19px;
    line-height: 24px;
    color: #999;
    mix-blend-mode: multiply;
}
.second {
    top: 167px;
}
.third {
    top: 527px;
}
.cell-cursor {
    position: absolute;
    left: 478px;
    top: 550px;
    width: 41px;
    height: 15px;
    border: 3px solid #606060;
}
.cell-cursor::after {
    content: "";
    position: absolute;
    right: -4px;
    bottom: -4px;
    width: 6px;
    height: 6px;
    border: solid #a0a0a0;
    border-width: 1px 0 0 1px;
    background: #606060;
}

/* scrollbars */
.v-scroll {
    display: flex;
    flex-direction: column;
    width: 15px;
    background: #dde2ea;
}
.v-split {
    height: 8px;
    border: 1px solid #838a94;
    background: linear-gradient(#838a94, #838a94) center / 7px 1px no-repeat #fff;
}
.scroll-btn {
    flex: none;
    min-width: 15px;
    height: 17px;
}
.scroll-btn svg {
    width: 9px;
    height: 9px;
}
.v-track {
    flex: 1;
}
.v-thumb {
    height: 267px;
    border: 1px solid #8a919c;
    background:
        repeating-linear-gradient(#858b95 0, #858b95 1px, #eef1f5 1px, #eef1f5 2px) center / 8px 7px no-repeat,
        linear-gradient(90deg, #f6f8fb, #dfe3ea);
}
.sheet-bar {
    display: flex;
    height: 16px;
    border-right: 1px solid #5b6470;
    border-bottom: 1px solid #a9afb8;
    background: #dde2ea;
}
.sheet-nav {
    display: grid;
    grid-template-columns: repeat(4, 15px);
    width: 62px;
    padding-left: 1px;
    border-right: 1px solid #a9afb8;
}
.sheet-nav svg {
    width: 7px;
    height: 8px;
}
.sheet-tab {
    justify-content: flex-start;
    width: 41px;
    font-size: 12px;
    color: #4d5562;
}
.sheet-tab.current {
    justify-content: center;
    width: 52px;
    background: #fff;
    font-weight: 600;
    color: #1e2531;
}
.sheet-tab.add {
    width: 20px;
}
.new-sheet {
    width: 16px;
    height: 14px;
}
.slant {
    width: 12px;
    height: 15px;
}
.h-scroll {
    display: flex;
    width: 313px;
    margin-left: auto;
}
.h-split {
    width: 8px;
    border: 1px solid #a0a6b0;
    background: linear-gradient(#838a94, #838a94) center / 1px 7px no-repeat #fff;
}
.h-scroll .scroll-btn {
    width: 17px;
    height: 15px;
}
.h-thumb {
    width: 246px;
    border: 1px solid #8a919c;
    background:
        repeating-linear-gradient(90deg, #858b95 0, #858b95 1px, #eef1f5 1px, #eef1f5 2px) center / 7px 7px no-repeat,
        linear-gradient(#f6f8fb, #dfe3ea);
}
.h-track {
    flex: 1;
}
.scroll-corner {
    width: 15px;
}

/* status bar */
.status {
    display: flex;
    align-items: center;
    height: 23px;
    border: 1px solid #6b7480;
    border-top-color: #f2f4f6;
    background: linear-gradient(#dfe3e7, #c3c8ce 60%, #cdd2d7);
}
.ready {
    width: 55px;
    padding-left: 7px;
    border-right: 1px solid #8b929c;
    line-height: 18px;
}
.macro {
    width: 35px;
    height: 18px;
    border-right: 1px solid #8b929c;
}
.views {
    display: flex;
    align-items: center;
    margin-left: auto;
    padding-left: 4px;
    border-left: 1px solid #8b929c;
}
.view {
    width: 19px;
    height: 19px;
}
.view svg {
    width: 14px;
    height: 12px;
}
.zoom-label {
    width: 45px;
    padding-right: 6px;
    text-align: center;
}
.round {
    width: 16px;
    height: 16px;
    border: 1px solid #6f7680;
    border-radius: 50%;
    background: linear-gradient(#fff, #dcdfe3);
}
.round svg {
    width: 8px;
    height: 8px;
}
.zoom {
    width: 100px;
    height: 14px;
    appearance: none;
    background:
        linear-gradient(#8b929c, #8b929c) center / 1px 8px no-repeat,
        linear-gradient(#8b929c, #8b929c) center / 100% 1px no-repeat;
}
.zoom::-webkit-slider-thumb {
    appearance: none;
    width: 9px;
    height: 13px;
    background: #fafbfc;
    border: 1px solid #6f7680;
    border-radius: 1px 1px 5px 5px;
}
.grip {
    width: 12px;
    height: 12px;
    margin-left: 6px;
    align-self: flex-end;
}
```
FILE: script.js
```js
// runs of equal rows: last row number, product, date, count, price, sum
const blocks = [
    [63, 'Рыба', '02.05.2016', 75, 289, 10456],
    [72, 'Сахар', '02.05.2016', 175, 45, 12546],
    [81, 'Картофель', '03.05.2016', 343, 45, 17456],
    [90, 'Мясо', '03.05.2016', 41, 236, 15456],
    [99, 'Рыба', '03.05.2016', 40, 289, 3256],
    [100, 'Сахар', '03.05.2016', 27, 45, 13485]
];

const body = document.getElementById('rows');

for (let n = 62; n <= 112; n++) {
    const row = body.insertRow();
    const head = document.createElement('th');
    head.textContent = n;
    if (n === 107) head.className = 'current';
    row.appendChild(head);

    const block = blocks.find(b => n <= b[0]);
    if (block) {
        row.className = 'data';
        block.slice(1).forEach((value, i) => {
            const cell = row.insertCell();
            cell.textContent = value;
            if (i === 0) cell.className = 'product';
        });
    } else if (n <= 110) {
        row.className = 'blank';
        for (let i = 0; i < 5; i++) row.insertCell();
    }

    // area outside the printed pages
    const rest = row.insertCell();
    rest.colSpan = n <= 110 ? 12 : 17;
    rest.className = 'void';
}
```
